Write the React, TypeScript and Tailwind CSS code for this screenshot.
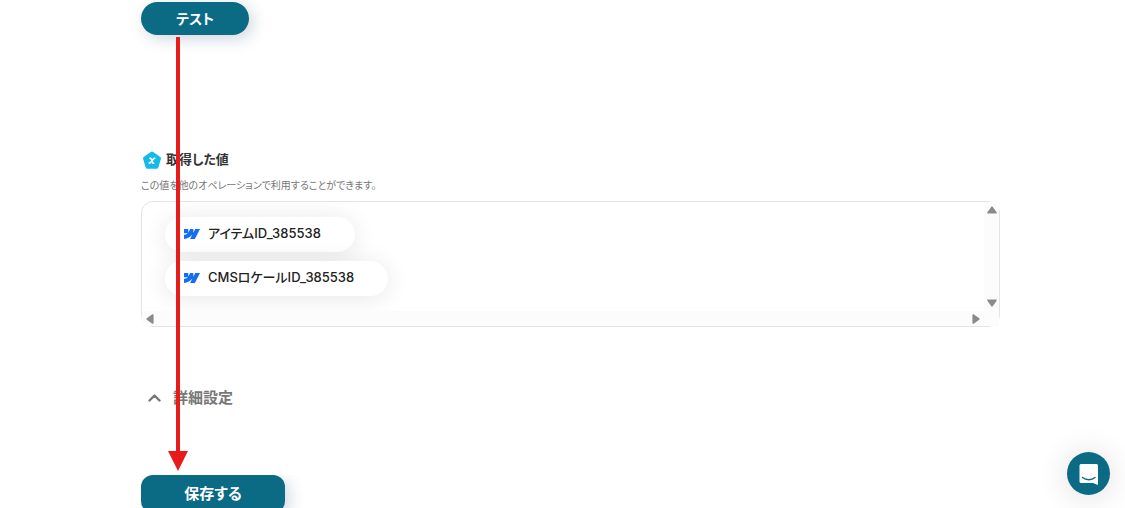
import React from 'react';
import { SiWebflow } from 'react-icons/si';

interface OutputValue {
  id: string;
  label: string;
}

const outputs: OutputValue[] = [
  { id: 'item', label: 'アイテムID_385538' },
  { id: 'locale', label: 'CMSロケールID_385538' },
];

const PentagonIcon: React.FC = () => (
  <svg className="h-5 w-5" viewBox="0 0 20 20" aria-hidden="true">
    <path
      d="M10 3 17.500 8.300 14.800 17.300H5.200L2.500 8.300Z"
      fill="#12bbe9"
      stroke="#12bbe9"
      strokeWidth="3"
      strokeLinejoin="round"
    />
    <path
      d="M8 8.200h.8l2.200 5h.8M12.800 8.300h-.6L7.800 13.100h-.6"
      fill="none"
      stroke="#fff"
      strokeWidth="1.600"
      strokeLinecap="round"
      strokeLinejoin="round"
    />
  </svg>
);

const ChatIcon: React.FC = () => (
  <svg className="h-6 w-6" viewBox="0 0 24 24" aria-hidden="true">
    <path d="M4 2H19.500a1.500 1.500 0 0 1 1.500 1.500V23l-5-2H4a1.500 1.500 0 0 1-1.500-1.500v-16A1.500 1.500 0 0 1 4 2Z" fill="#fff" />
    <path d="M5.500 15.500c3.500 3 9 3 12.500 0" fill="none" stroke="#0b6a84" strokeWidth="1.400" strokeLinecap="round" />
  </svg>
);

const ScrollArrow: React.FC<{ className?: string }> = ({ className = '' }) => (
  <svg className={`h-2 w-[10px] ${className}`} viewBox="0 0 10 8" aria-hidden="true">
    <path d="M5 1.200 9 6.800H1Z" fill="#8b8b8b" stroke="#8b8b8b" strokeWidth="1.600" strokeLinejoin="round" />
  </svg>
);

const FlowArrow: React.FC = () => (
  <svg
    className="pointer-events-none absolute top-[37px] left-[168px] z-10 h-[434px] w-5"
    viewBox="0 0 20 434"
    aria-hidden="true"
  >
    <path d="M8 0h4v414h8L10 434 0 414h8Z" fill="#e81b1b" />
  </svg>
);

const App: React.FC = () => {
  return (
    <div className="relative h-screen overflow-hidden bg-white font-['Inter','Noto_Sans_CJK_JP',sans-serif] [font-feature-settings:'palt']">
      <main className="flex flex-col pt-[2px] pr-[125px] pl-[141px]">
        <button
          type="button"
          className="h-[33px] w-[108px] rounded-full bg-[#0b6a84] text-sm font-bold text-white shadow-[4px_4px_16px_rgba(20,50,90,0.2)]"
        >
          テスト
        </button>

        {/* Output values */}
        <section className="mt-[115px]">
          <div className="flex h-5 items-center gap-1 pl-px">
            <PentagonIcon />
            <h2 className="text-[13px] font-semibold text-[#333333]">取得した値</h2>
          </div>
          <p className="mt-[5px] text-[10px] leading-5 text-[#777777]">
            この値を他のオペレーションで利用することができます。
          </p>

          <div className="mt-[6px] grid h-[126px] grid-cols-[1fr_15px] grid-rows-[1fr_15px] rounded-xl border border-[#e4e4e4]">
            <ul className="flex flex-col items-start gap-[9px] overflow-hidden pt-[15px] pl-[23px]">
              {outputs.map((output) => (
                <li
                  key={output.id}
                  className="flex h-[35px] items-center gap-2 rounded-full bg-white pr-[34px] pb-px pl-[19px] text-[13px] font-medium text-[#222222] shadow-[0_2px_24px_rgba(0,0,0,0.1)]"
                >
                  <SiWebflow className="h-4 w-4 text-[#146ef5]" aria-hidden="true" />
                  {output.label}
                </li>
              ))}
            </ul>
            <div className="flex flex-col items-center justify-between bg-[#fcfcfc] py-1">
              <ScrollArrow />
              <ScrollArrow className="rotate-180" />
            </div>
            <div className="flex items-center justify-between bg-[#fcfcfc] px-[3px]">
              <ScrollArrow className="-rotate-90" />
              <ScrollArrow className="rotate-90" />
            </div>
            <div className="bg-[#fcfcfc]" />
          </div>
        </section>

        {/* Advanced settings */}
        <button
          type="button"
          className="mt-[61px] flex h-5 items-center gap-3 self-start pl-[7px] text-[15px] font-semibold text-[#777777]"
        >
          <svg className="h-2 w-[13px]" viewBox="0 0 13 8" aria-hidden="true">
            <path d="M1.500 6.500 6.500 1.500l5 5" fill="none" stroke="currentColor" strokeWidth="2.400" strokeLinecap="round" strokeLinejoin="round" />
          </svg>
          詳細設定
        </button>

        <div className="mt-[67px] overflow-hidden pb-6">
          <button
            type="button"
            className="h-[38px] w-36 rounded-xl bg-[#0b6a84] text-[15px] font-bold text-white shadow-[4px_4px_16px_rgba(20,50,90,0.2)]"
          >
            保存する
          </button>
        </div>
      </main>

      <FlowArrow />

      <button
        type="button"
        aria-label="チャット"
        className="absolute right-[15px] bottom-[13px] flex h-[43px] w-[43px] items-center justify-center rounded-full bg-[#0b6a84] shadow-[0_2px_32px_rgba(0,0,0,0.14)]"
      >
        <ChatIcon />
      </button>
    </div>
  );
};

export default App;
